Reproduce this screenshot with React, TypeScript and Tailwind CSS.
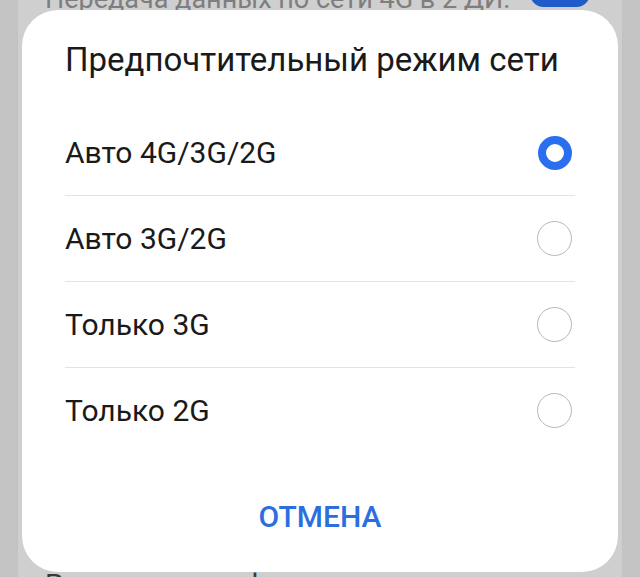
const options = ["Авто 4G/3G/2G", "Авто 3G/2G", "Только 3G", "Только 2G"];

function Radio(props: { checked: boolean }) {
  if (props.checked) {
    return (
      <div className="mr-[3px] h-[34px] w-[34px] rounded-full border-[8.5px] border-[#2a6ff0] bg-white" />
    );
  }
  return (
    <div className="mr-[3px] h-[35px] w-[35px] rounded-full border-[1.7px] border-[#b7b7b7] bg-white" />
  );
}

function App() {
  const selected = 0;

  return (
    <div className="relative h-[577px] w-[640px] overflow-hidden bg-[#c3c3c3] font-['Roboto','Noto_Sans',sans-serif]">
      {/* dimmed settings screen behind the dialog */}
      <div className="mx-[18px] flex h-full flex-col justify-between bg-[#cfcfcf]">
        <div className="flex items-start justify-between gap-[20px] pl-[27px] pr-[32px]">
          <div className="-mt-[17px] overflow-hidden whitespace-nowrap text-[27px] leading-[32px] text-[#7e7e7e]">
            Передача данных по сети 4G в 2 ДИ...
          </div>
          <div className="-mt-[20px] h-[27px] w-[60px] shrink-0 rounded-full bg-[#1f5bc9]" />
        </div>
        <div className="-mb-[24px] pl-[27px] text-[29px] leading-[32px] text-[#3a3a3a]">
          Расширенные функции
        </div>
      </div>

      <div className="absolute left-[22px] top-[10px] flex h-[562px] w-[596px] flex-col rounded-[36px] bg-white text-[#1a1a1a]">
        <div className="px-[43px] pt-[30px] text-[33px] leading-[40px]">
          Предпочтительный режим сети
        </div>
        <div className="mt-[30px] px-[43px]">
          {options.map((opt, i) => (
            <div key={opt}>
              <div className="flex h-[85px] items-center justify-between">
                <span className="text-[30px] leading-[36px]">{opt}</span>
                <Radio checked={i === selected} />
              </div>
              {i < options.length - 1 && (
                <div className="h-px bg-[#e3e3e3]" />
              )}
            </div>
          ))}
        </div>
        <div className="flex flex-1 items-center justify-center pt-[9px]">
          <span className="text-[30px] font-medium leading-[36px] text-[#2b6fde]">
            ОТМЕНА
          </span>
        </div>
      </div>
    </div>
  );
}

export default App;
